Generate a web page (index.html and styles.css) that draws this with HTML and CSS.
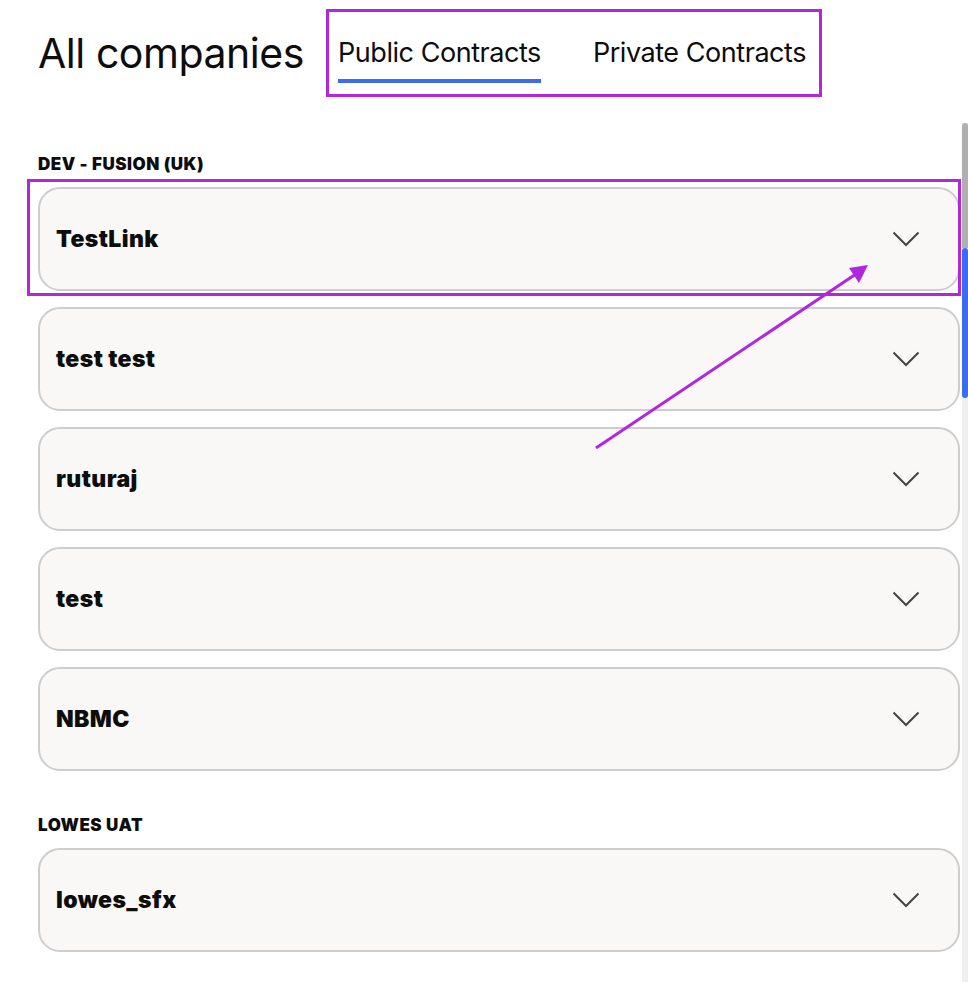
FILE: index.html
```html
<!DOCTYPE html>
<html lang="en">
<head>
<meta charset="utf-8">
<title>All companies</title>
<link rel="stylesheet" href="styles.css">
</head>
<body>
<div class="page">
  <header class="header">
    <h1 class="title">All companies</h1>
    <nav class="tabs">
      <span class="tab tab-active">Public Contracts</span>
      <span class="tab">Private Contracts</span>
    </nav>
  </header>

  <main class="list">
    <section class="group">
      <h2 class="group-label">DEV - FUSION (UK)</h2>
      <div class="cards">
        <div class="card highlighted">
          <span class="card-name">TestLink</span>
          <svg class="chev" viewBox="0 0 28 16" width="28" height="16"><path d="M1.5 1.5 L14 14 L26.5 1.5" fill="none" stroke="#444" stroke-width="2"/></svg>
          <span class="mark"></span>
        </div>
        <div class="card">
          <span class="card-name">test test</span>
          <svg class="chev" viewBox="0 0 28 16" width="28" height="16"><path d="M1.5 1.5 L14 14 L26.5 1.5" fill="none" stroke="#444" stroke-width="2"/></svg>
        </div>
        <div class="card">
          <span class="card-name">ruturaj</span>
          <svg class="chev" viewBox="0 0 28 16" width="28" height="16"><path d="M1.5 1.5 L14 14 L26.5 1.5" fill="none" stroke="#444" stroke-width="2"/></svg>
        </div>
        <div class="card">
          <span class="card-name">test</span>
          <svg class="chev" viewBox="0 0 28 16" width="28" height="16"><path d="M1.5 1.5 L14 14 L26.5 1.5" fill="none" stroke="#444" stroke-width="2"/></svg>
        </div>
        <div class="card">
          <span class="card-name">NBMC</span>
          <svg class="chev" viewBox="0 0 28 16" width="28" height="16"><path d="M1.5 1.5 L14 14 L26.5 1.5" fill="none" stroke="#444" stroke-width="2"/></svg>
        </div>
      </div>
    </section>

    <section class="group">
      <h2 class="group-label">LOWES UAT</h2>
      <div class="cards">
        <div class="card">
          <span class="card-name">lowes_sfx</span>
          <svg class="chev" viewBox="0 0 28 16" width="28" height="16"><path d="M1.5 1.5 L14 14 L26.5 1.5" fill="none" stroke="#444" stroke-width="2"/></svg>
        </div>
      </div>
    </section>
  </main>

  <div class="scrollbar"><span class="scroll-upper"></span><span class="scroll-thumb"></span></div>

  <svg class="arrow" width="968" height="982" viewBox="0 0 968 982">
    <line x1="596" y1="448" x2="856" y2="274" stroke="#b027dd" stroke-width="3"/>
    <polygon points="868,265 849,268 859,283" fill="#b027dd"/>
  </svg>
</div>
</body>
</html>
```

FILE: styles.css
```css
* { box-sizing: border-box; }
html, body { margin: 0; padding: 0; background: #ffffff; }
body {
  font-family: Inter, "Liberation Sans", sans-serif;
  color: #0d0d0d;
  width: 968px;
  height: 982px;
  overflow: hidden;
}
.page { position: relative; width: 968px; height: 982px; }

.header {
  display: flex;
  align-items: flex-start;
  padding: 9px 0 0 38px;
  gap: 22px;
}
.title {
  margin: 20px 0 0 0;
  font-size: 41px;
  font-weight: 400;
  letter-spacing: -0.45px;
  line-height: 48px;
  white-space: nowrap;
}
.tabs {
  display: flex;
  gap: 52px;
  border: 3px solid #b027dd;
  width: 496px;
  height: 88px;
  padding: 22px 0 0 9px;
}
.tab {
  font-size: 27px;
  line-height: 38px;
  letter-spacing: -0.45px;
  height: 49px;
  white-space: nowrap;
  border-bottom: 4px solid transparent;
}
.tab-active { border-bottom-color: #3b6cef; }

.list {
  padding: 56px 8px 0 38px;
}
.group { margin-bottom: 43px; }
.group-label {
  margin: 0 0 12px 0;
  font-size: 17px;
  font-weight: 900;
  letter-spacing: 0.5px;
  line-height: 22px;
}
.cards { display: flex; flex-direction: column; gap: 16px; }
.card {
  position: relative;
  display: flex;
  align-items: center;
  justify-content: space-between;
  height: 104px;
  padding: 0 38px 0 16px;
  background: #f9f8f6;
  border: 2px solid #cdcdcd;
  border-radius: 22px;
}
.card-name {
  font-size: 23px;
  font-weight: 900;
  letter-spacing: 0.4px;
}
.chev { display: block; margin-top: 0; }

.mark {
  position: absolute;
  top: -10px;
  left: -13px;
  right: -3px;
  bottom: -7px;
  border: 3px solid #b027dd;
  pointer-events: none;
}

.scrollbar {
  position: absolute;
  top: 123px;
  right: 0;
  width: 6px;
  height: 859px;
  background: #efefef;
  display: flex;
  flex-direction: column;
}
.scroll-upper { height: 125px; background: #b0b0b0; border-radius: 3px 3px 0 0; }
.scroll-thumb { height: 150px; background: #3b6cef; border-radius: 4px; }

.arrow { position: absolute; top: 0; left: 0; pointer-events: none; }
```
